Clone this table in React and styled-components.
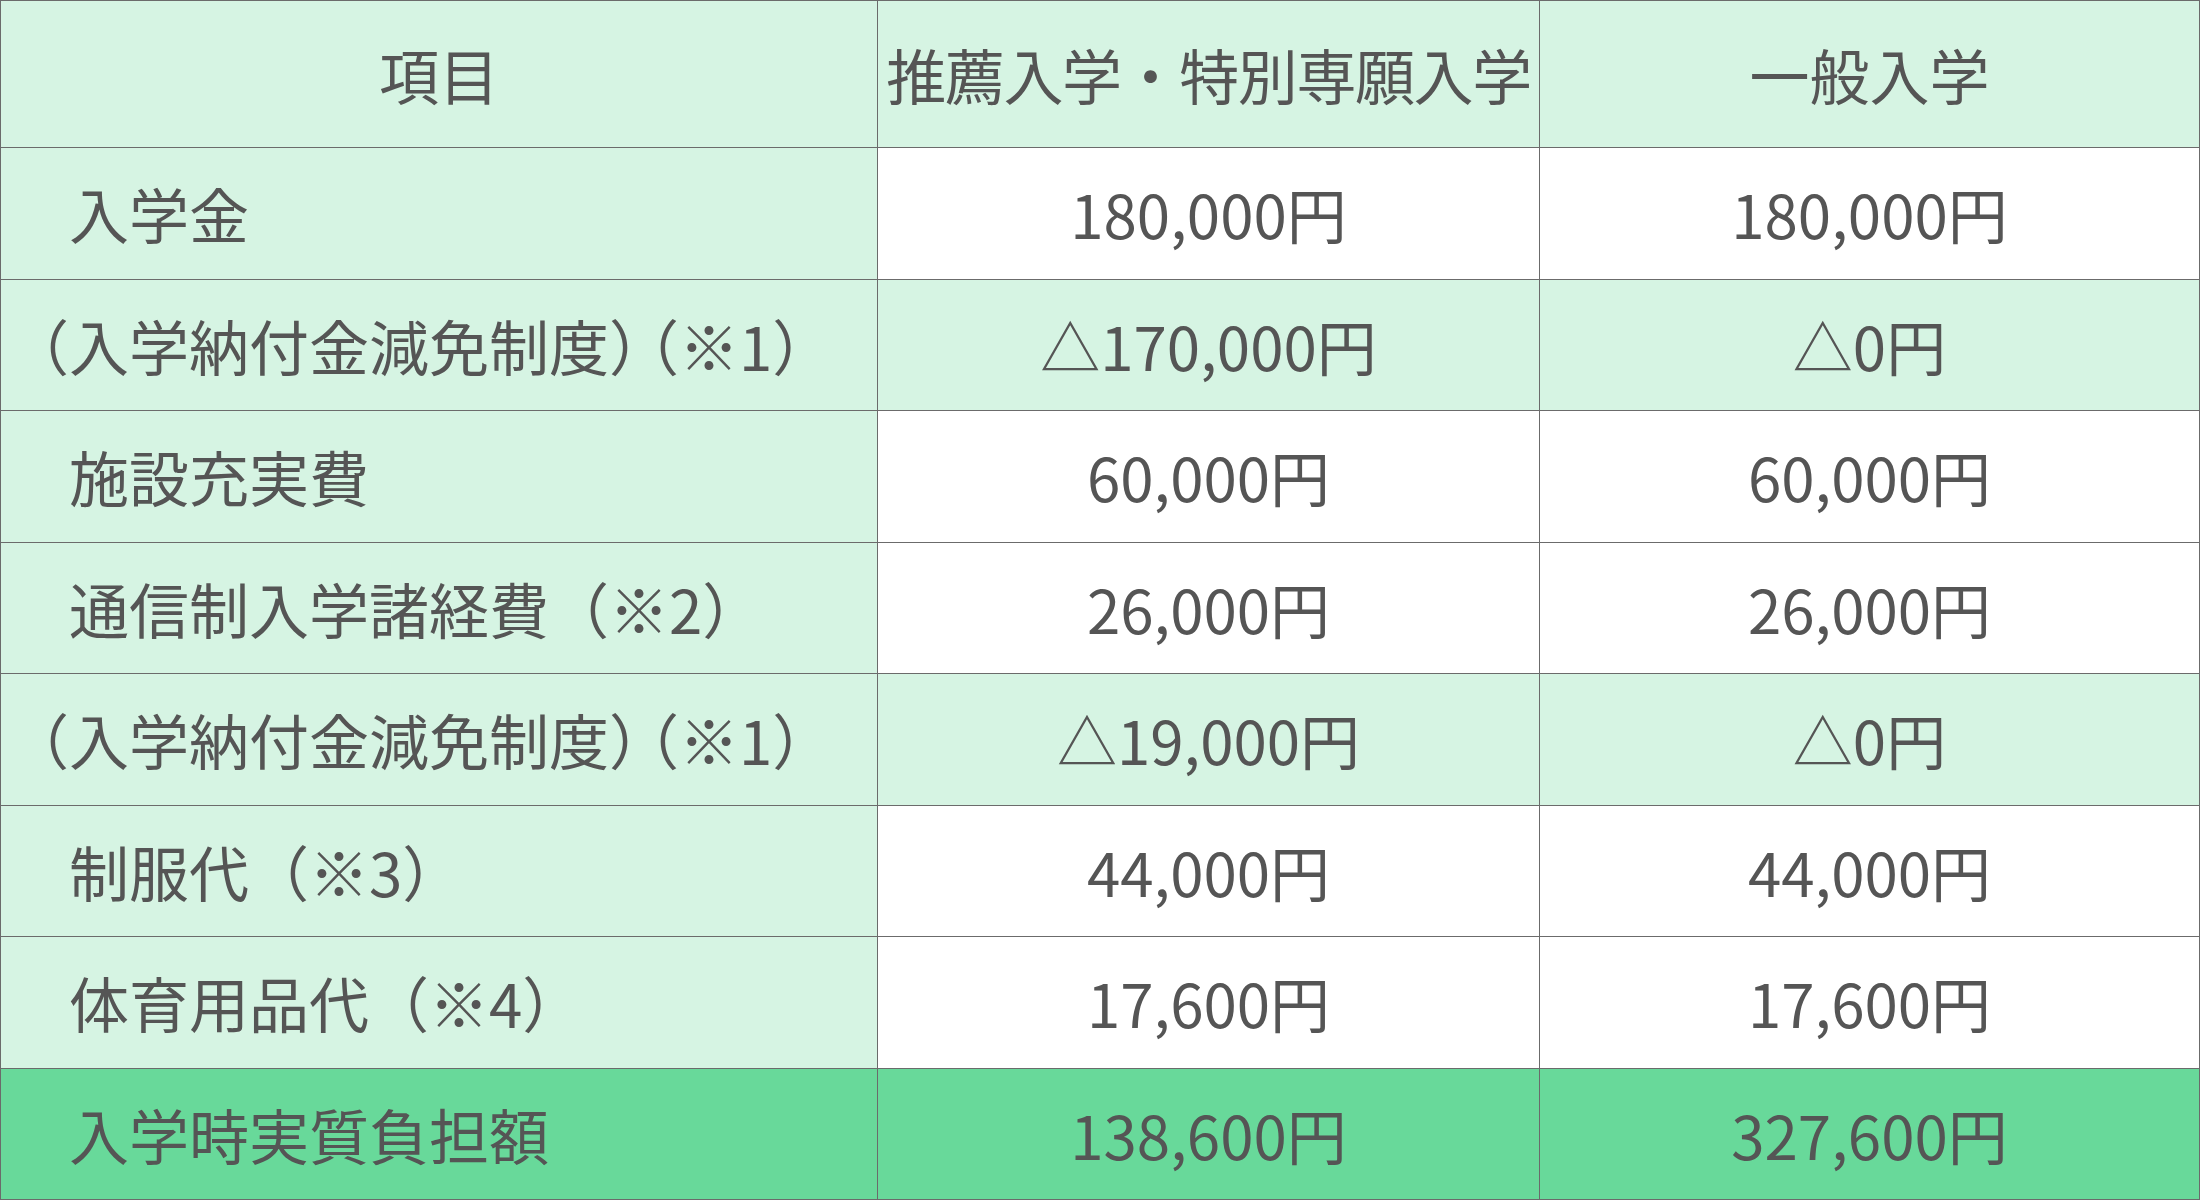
import styled, { createGlobalStyle } from "styled-components";

const GlobalStyle = createGlobalStyle`
  html, body {
    margin: 0;
    padding: 0;
    height: 1200px;
    overflow: hidden;
    background: #ffffff;
  }
  body {
    font-family: "Noto Sans CJK JP", "Noto Sans", sans-serif;
    color: #555555;
  }
`;

const Table = styled.div`
  display: grid;
  grid-template-columns: 876px 661px 659px;
  grid-template-rows: 146px repeat(8, 1fr);
  gap: 1px;
  padding: 1px;
  width: 2200px;
  height: 1200px;
  box-sizing: border-box;
  background: #6b6b6b;
`;

const bg = {
  head: "#d6f4e3",
  label: "#d6f4e3",
  white: "#ffffff",
  mint: "#d6f4e3",
  total: "#68d99a",
};

const Cell = styled.div`
  display: flex;
  align-items: center;
  justify-content: ${(p) => (p.$left ? "flex-start" : "center")};
  padding: ${(p) => (p.$left ? "0 0 0 8px" : "0")};
  background: ${(p) => bg[p.$tone]};
  font-size: 60px;
  line-height: 1;
  letter-spacing: ${(p) => (p.$tight ? "-1.4px" : "0")};
  white-space: nowrap;
  overflow: hidden;
  color: #555555;
`;

const Text = styled.span`
  display: inline-block;
`;

// closing bracket followed by an opening one: collapse the doubled gap
const Trim = styled.span`
  letter-spacing: -20px;
`;

const Note = ({ n }) => (
  <Text>
    （入学納付金減免制度<Trim>）</Trim>（※{n}）
  </Text>
);

const rows = [
  { label: "　入学金", a: "180,000円", b: "180,000円", tone: "white" },
  { label: <Note n="1" />, a: "△170,000円", b: "△0円", tone: "mint" },
  { label: "　施設充実費", a: "60,000円", b: "60,000円", tone: "white" },
  { label: "　通信制入学諸経費（※2）", a: "26,000円", b: "26,000円", tone: "white" },
  { label: <Note n="1" />, a: "△19,000円", b: "△0円", tone: "mint" },
  { label: "　制服代（※3）", a: "44,000円", b: "44,000円", tone: "white" },
  { label: "　体育用品代（※4）", a: "17,600円", b: "17,600円", tone: "white" },
  { label: "　入学時実質負担額", a: "138,600円", b: "327,600円", tone: "total" },
];

function Row({ row }) {
  const labelTone = row.tone === "total" ? "total" : "label";
  return (
    <>
      <Cell $left $tone={labelTone}>{row.label}</Cell>
      <Cell $tone={row.tone}>{row.a}</Cell>
      <Cell $tone={row.tone}>{row.b}</Cell>
    </>
  );
}

export default function App() {
  return (
    <>
      <GlobalStyle />
      <Table>
        <Cell $tone="head">項目</Cell>
        <Cell $tone="head" $tight>推薦入学・特別専願入学</Cell>
        <Cell $tone="head">一般入学</Cell>
        {rows.map((r, i) => (
          <Row key={i} row={r} />
        ))}
      </Table>
    </>
  );
}
